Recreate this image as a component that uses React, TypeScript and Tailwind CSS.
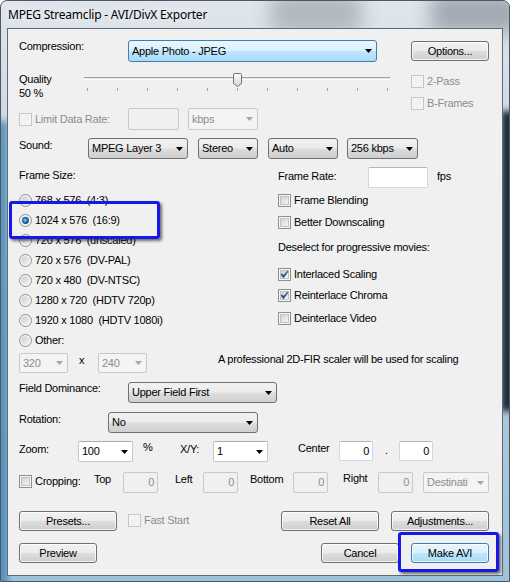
import React from "react";

type Kind = "btn" | "hot" | "edit" | "dis";

function Arrow({ dis }: { dis?: boolean }) {
  return (
    <svg width="7" height="4" viewBox="0 0 7 4" className="shrink-0">
      <path d="M0 0H7L3.5 4Z" fill={dis ? "#a6a6a6" : "#000"} />
    </svg>
  );
}

function Combo({ w, h, kind = "btn", text, cls = "" }: { w: string; h?: string; kind?: Kind; text: string; cls?: string }) {
  const skin =
    kind === "hot"
      ? "rounded-[3px] border border-[#3c7fb1] bg-[linear-gradient(#eaf6fd_0%,#d9f0fc_48%,#bee6fd_52%,#a9dbf6_100%)]"
      : kind === "btn"
      ? "rounded-[3px] border border-[#707070] bg-[linear-gradient(#f2f2f2_0%,#ebebeb_48%,#dddddd_52%,#cfcfcf_100%)]"
      : kind === "edit"
      ? "rounded-[2px] border border-[#c3c7cd] border-t-[#abadb3] bg-white"
      : "rounded-[2px] border border-[#c9c9c9] bg-[#f4f4f4] text-[#8d8d8d]";
  return (
    <div className={`${w} ${h ?? "h-[21px]"} ${skin} ${cls} shrink-0 flex items-center justify-between pl-[3px] pr-[4px] whitespace-nowrap overflow-hidden`}>
      <span>{text}</span>
      <Arrow dis={kind === "dis"} />
    </div>
  );
}

function Btn({ w, children, def, cls = "" }: { w: string; children: React.ReactNode; def?: boolean; cls?: string }) {
  return (
    <div
      className={`${w} ${cls} h-[20px] shrink-0 rounded-[3px] border flex items-center justify-center shadow-[inset_0_0_0_1px_rgba(255,255,255,0.75)] ${
        def
          ? "border-[#3c7fb1] bg-[linear-gradient(#eaf6fd_0%,#d9f0fc_48%,#bee6fd_52%,#a9dbf6_100%)]"
          : "border-[#707070] bg-[linear-gradient(#f2f2f2_0%,#ebebeb_48%,#dddddd_52%,#cfcfcf_100%)]"
      }`}
    >
      {children}
    </div>
  );
}

function TextBox({ w, h, dis, value = "", cls = "" }: { w: string; h?: string; dis?: boolean; value?: string; cls?: string }) {
  return (
    <div
      className={`${w} ${h ?? "h-[21px]"} ${cls} shrink-0 rounded-[2px] border flex items-center justify-end pr-[3px] ${
        dis ? "border-[#c9c9c9] bg-[#f0f0f0] text-[#8d8d8d]" : "border-[#d3d7dc] border-t-[#b4b8be] bg-white"
      }`}
    >
      {value}
    </div>
  );
}

function Check({ checked, dis }: { checked?: boolean; dis?: boolean }) {
  return (
    <svg width="13" height="13" viewBox="0 0 13 13" className="shrink-0">
      <rect x="0.5" y="0.5" width="12" height="12" fill="#f6f6f6" stroke={dis ? "#c5c5c5" : "#8e8f8f"} />
      {dis ? (
        <rect x="2" y="2" width="9" height="9" fill="#f2f2f2" />
      ) : (
        <rect x="2.5" y="2.5" width="8" height="8" fill="url(#cbIn)" stroke="#c1c3c6" />
      )}
      {checked && <path d="M2.6 6.4 L4.2 5.2 L5.4 7 L9.4 2.4 L10.6 3.4 L5.4 10.2 Z" fill="url(#ckG)" />}
    </svg>
  );
}

function Radio({ on }: { on?: boolean }) {
  return (
    <svg width="13" height="13" viewBox="0 0 13 13" className="shrink-0">
      <circle cx="6.5" cy="6.5" r="6" fill="#f4f4f4" stroke="#8e8f8f" />
      <circle cx="6.5" cy="6.5" r="4.2" fill="url(#rdIn)" />
      {on && <circle cx="6.5" cy="6.5" r="3.4" fill="url(#rdOn)" />}
    </svg>
  );
}

function CheckRow({ label, checked, dis }: { label: string; checked?: boolean; dis?: boolean }) {
  return (
    <div className={`h-[13px] flex items-center gap-[3px] whitespace-nowrap ${dis ? "text-[#8d8d8d]" : ""}`}>
      <Check checked={checked} dis={dis} />
      <span>{label}</span>
    </div>
  );
}

function RadioRow({ label, on }: { label: string; on?: boolean }) {
  return (
    <div className="h-[20px] flex items-center gap-[3px] whitespace-pre">
      <Radio on={on} />
      <span>{label}</span>
    </div>
  );
}

export default function App() {
  const ticks = Array.from({ length: 11 }, (_, i) => i);
  const sizes = [
    "768 x 576  (4:3)",
    "1024 x 576  (16:9)",
    "720 x 576  (unscaled)",
    "720 x 576  (DV-PAL)",
    "720 x 480  (DV-NTSC)",
    "1280 x 720  (HDTV 720p)",
    "1920 x 1080  (HDTV 1080i)",
    "Other:",
  ];
  return (
    <div className="w-[510px] h-[582px] relative overflow-hidden rounded-t-[7px] border border-[#4d5763] bg-[linear-gradient(180deg,#e0e6ec_0%,#cad6e0_25%,#b1c8d8_60%,#9dc3dc_100%)] font-['Liberation_Sans',Arial,sans-serif] text-[11px] leading-[13px] tracking-[-0.25px] text-black flex flex-col">
      <svg width="0" height="0" className="absolute">
        <defs>
          <linearGradient id="cbIn" x1="0" y1="0" x2="1" y2="1">
            <stop offset="0" stopColor="#cbcfd5" />
            <stop offset="1" stopColor="#f7f7f7" />
          </linearGradient>
          <linearGradient id="ckG" x1="0" y1="0" x2="0" y2="1">
            <stop offset="0" stopColor="#5b73b0" />
            <stop offset="1" stopColor="#2c3f73" />
          </linearGradient>
          <linearGradient id="rdIn" x1="0" y1="0" x2="1" y2="1">
            <stop offset="0" stopColor="#c9ccd1" />
            <stop offset="1" stopColor="#f5f5f5" />
          </linearGradient>
          <radialGradient id="rdOn" cx="0.45" cy="0.45" r="0.6">
            <stop offset="0" stopColor="#a9dcfa" />
            <stop offset="0.45" stopColor="#2a7fcc" />
            <stop offset="1" stopColor="#0c2f66" />
          </radialGradient>
          <linearGradient id="thG" x1="0" y1="0" x2="0" y2="1">
            <stop offset="0" stopColor="#fbfbfb" />
            <stop offset="1" stopColor="#d6d6d6" />
          </linearGradient>
        </defs>
      </svg>

      {/* glass backdrop shading */}
      <div className="absolute left-[270px] top-[-8px] w-[90px] h-[40px] bg-[#9ca3ab] blur-[10px] opacity-70" />
      <div className="absolute left-[430px] top-[-8px] w-[90px] h-[40px] bg-[#858e98] blur-[10px] opacity-70" />
      <div className="absolute right-[-6px] top-[110px] w-[14px] h-[300px] bg-[#1e2b3b] blur-[3px]" />
      <div className="absolute left-[-6px] top-[120px] w-[13px] h-[470px] bg-[#3f86b2] blur-[3px] opacity-80" />

      <div className="relative h-[27px] pl-[7px] flex items-center font-['Noto_Sans',sans-serif] text-[12px] tracking-[-0.2px] [text-shadow:0_0_8px_rgba(255,255,255,0.95)]">
        MPEG Streamclip - AVI/DivX Exporter
      </div>

      <div className="relative mx-[6px] h-[548px] border border-[#5f6b78] bg-[#f0f0f0] pl-[11px] pr-[13px] flex flex-col">
        {/* Compression */}
        <div className="mt-[11px] flex items-start h-[22px]">
          <div className="w-[109px] shrink-0 pt-[0px]">Compression:</div>
          <Combo w="w-[249px]" h="h-[22px]" kind="hot" text="Apple Photo - JPEG" />
          <Btn w="w-[78px]" cls="ml-[34px] mt-[1px]">Options...</Btn>
        </div>

        {/* Quality / Limit / 2-pass */}
        <div className="mt-[10px] flex">
          <div className="w-[392px] shrink-0">
            <div className="flex h-[36px]">
              <div className="w-[65px] shrink-0 leading-[13.5px] pt-[1px]">
                <div>Quality</div>
                <div>50 %</div>
              </div>
              <div className="relative w-[306px]">
                <div className="mt-[5px] h-[3px] border-t border-[#a2a2a2] bg-[#e4e4e4] border-b border-b-white" />
                <div className="ml-[3px] mt-[8px] w-[301px] h-[3px] flex justify-between">
                  {ticks.map((t) => (
                    <div key={t} className="w-[1px] h-[3px] bg-[#a5a5a5]" />
                  ))}
                </div>
                <svg width="9" height="14" viewBox="0 0 9 14" className="absolute left-[149px] top-[1px]">
                  <path d="M1.5 0.5H7.5Q8.5 0.5 8.5 1.5V10.5L4.5 13.5L0.5 10.5V1.5Q0.5 0.5 1.5 0.5Z" fill="url(#thG)" stroke="#707070" />
                </svg>
              </div>
            </div>
            <div className="flex h-[22px] items-center">
              <div className="w-[109px] shrink-0 flex items-center gap-[3px] text-[#8d8d8d] whitespace-nowrap">
                <Check dis />
                <span>Limit Data Rate:</span>
              </div>
              <TextBox w="w-[51px]" h="h-[22px]" dis />
              <Combo w="w-[70px]" h="h-[22px]" kind="dis" text="kbps" cls="ml-[9px]" />
            </div>
          </div>
          <div className="mt-[3px] flex flex-col gap-[9px]">
            <CheckRow dis label="2-Pass" />
            <CheckRow dis label="B-Frames" />
          </div>
        </div>

        {/* Sound */}
        <div className="mt-[8px] flex items-start h-[21px]">
          <div className="w-[69px] shrink-0 pt-[1px]">Sound:</div>
          <Combo w="w-[100px]" text="MPEG Layer 3" />
          <Combo w="w-[60px]" text="Stereo" cls="ml-[10px]" />
          <Combo w="w-[70px]" text="Auto" cls="ml-[10px]" />
          <Combo w="w-[71px]" text="256 kbps" cls="ml-[9px]" />
        </div>

        {/* Frame size / options */}
        <div className="mt-[8px] flex">
          <div className="w-[259px] shrink-0 flex flex-col">
            <div className="h-[16px] leading-[16px]">Frame Size:</div>
            <div className="mt-[7px] flex flex-col">
              {sizes.map((s, i) => (
                <RadioRow key={s} label={s} on={i === 1} />
              ))}
            </div>
          </div>
          <div className="flex flex-col">
            <div className="flex items-start h-[21px]">
              <div className="w-[90px] shrink-0 pt-[3px]">Frame Rate:</div>
              <TextBox w="w-[60px]" />
              <div className="ml-[9px] pt-[3px]">fps</div>
            </div>
            <div className="mt-[6px]"><CheckRow label="Frame Blending" /></div>
            <div className="mt-[9px]"><CheckRow label="Better Downscaling" /></div>
            <div className="mt-[12px] whitespace-nowrap">Deselect for progressive movies:</div>
            <div className="mt-[14px]"><CheckRow checked label="Interlaced Scaling" /></div>
            <div className="mt-[8px]"><CheckRow checked label="Reinterlace Chroma" /></div>
            <div className="mt-[10px]"><CheckRow label="Deinterlace Video" /></div>
          </div>
        </div>

        {/* Other size */}
        <div className="mt-[3px] flex items-start h-[20px]">
          <Combo w="w-[49px]" h="h-[20px]" kind="dis" text="320" />
          <div className="w-[30px] shrink-0 pl-[11px] pt-[1px]">x</div>
          <Combo w="w-[49px]" h="h-[20px]" kind="dis" text="240" />
          <div className="ml-[71px] pt-[0px] whitespace-nowrap">A professional 2D-FIR scaler will be used for scaling</div>
        </div>

        {/* Field dominance */}
        <div className="mt-[9px] flex items-start h-[21px]">
          <div className="w-[109px] shrink-0">Field Dominance:</div>
          <Combo w="w-[149px]" text="Upper Field First" />
        </div>

        {/* Rotation */}
        <div className="mt-[9px] flex items-start h-[21px]">
          <div className="w-[89px] shrink-0 pt-[1px]">Rotation:</div>
          <Combo w="w-[150px]" text="No" />
        </div>

        {/* Zoom */}
        <div className="mt-[8px] flex items-start h-[21px]">
          <div className="w-[59px] shrink-0 pt-[2px]">Zoom:</div>
          <Combo w="w-[55px]" kind="edit" text="100" />
          <div className="w-[47px] shrink-0 pl-[10px] pt-[0px]">%</div>
          <div className="w-[33px] shrink-0 pt-[2px]">X/Y:</div>
          <Combo w="w-[55px]" kind="edit" text="1" />
          <div className="w-[30px] shrink-0" />
          <div className="w-[41px] shrink-0 pt-[1px]">Center</div>
          <TextBox w="w-[34px]" h="h-[20px]" value="0" />
          <div className="w-[26px] shrink-0 pl-[12px] pt-[3px]">.</div>
          <TextBox w="w-[34px]" h="h-[20px]" value="0" />
        </div>

        {/* Cropping */}
        <div className="mt-[10px] flex items-start h-[21px]">
          <div className="w-[75px] shrink-0 mt-[3px] h-[13px] flex items-center gap-[3px]">
            <Check />
            <span>Cropping:</span>
          </div>
          <div className="w-[29px] shrink-0 pt-[1px]">Top</div>
          <TextBox w="w-[35px]" dis value="0" />
          <div className="w-[17px] shrink-0" />
          <div className="w-[28px] shrink-0 pt-[1px]">Left</div>
          <TextBox w="w-[35px]" dis value="0" />
          <div className="w-[12px] shrink-0" />
          <div className="w-[43px] shrink-0 pt-[1px]">Bottom</div>
          <TextBox w="w-[35px]" dis value="0" />
          <div className="w-[15px] shrink-0" />
          <div className="w-[35px] shrink-0 pt-[0px]">Right</div>
          <TextBox w="w-[35px]" dis value="0" />
          <Combo w="w-[66px]" kind="dis" text="Destinati" cls="ml-[10px]" />
        </div>

        {/* Presets row */}
        <div className="mt-[18px] flex items-start h-[20px]">
          <Btn w="w-[98px]">Presets...</Btn>
          <div className="ml-[11px] mt-[3px] h-[13px] flex items-center gap-[3px] text-[#8d8d8d]">
            <Check dis />
            <span>Fast Start</span>
          </div>
          <Btn w="w-[98px]" cls="ml-auto">Reset All</Btn>
          <Btn w="w-[98px]" cls="ml-[12px]">Adjustments...</Btn>
        </div>

        {/* Bottom row */}
        <div className="mt-[12px] flex items-start h-[20px]">
          <Btn w="w-[78px]">Preview</Btn>
          <Btn w="w-[78px]" cls="ml-auto">Cancel</Btn>
          <Btn w="w-[78px]" cls="ml-[12px]" def>Make AVI</Btn>
        </div>

        {/* annotation highlights */}
        <div className="absolute left-[1px] top-[172px] w-[151px] h-[38px] rounded-[3px] border-[3px] border-[#1717e6] shadow-[2px_2px_3px_rgba(0,0,0,0.55)]" />
        <div className="absolute left-[390px] top-[503px] w-[101px] h-[40px] rounded-[3px] border-[3px] border-[#1717e6] shadow-[2px_2px_3px_rgba(0,0,0,0.55)]" />
      </div>
    </div>
  );
}
